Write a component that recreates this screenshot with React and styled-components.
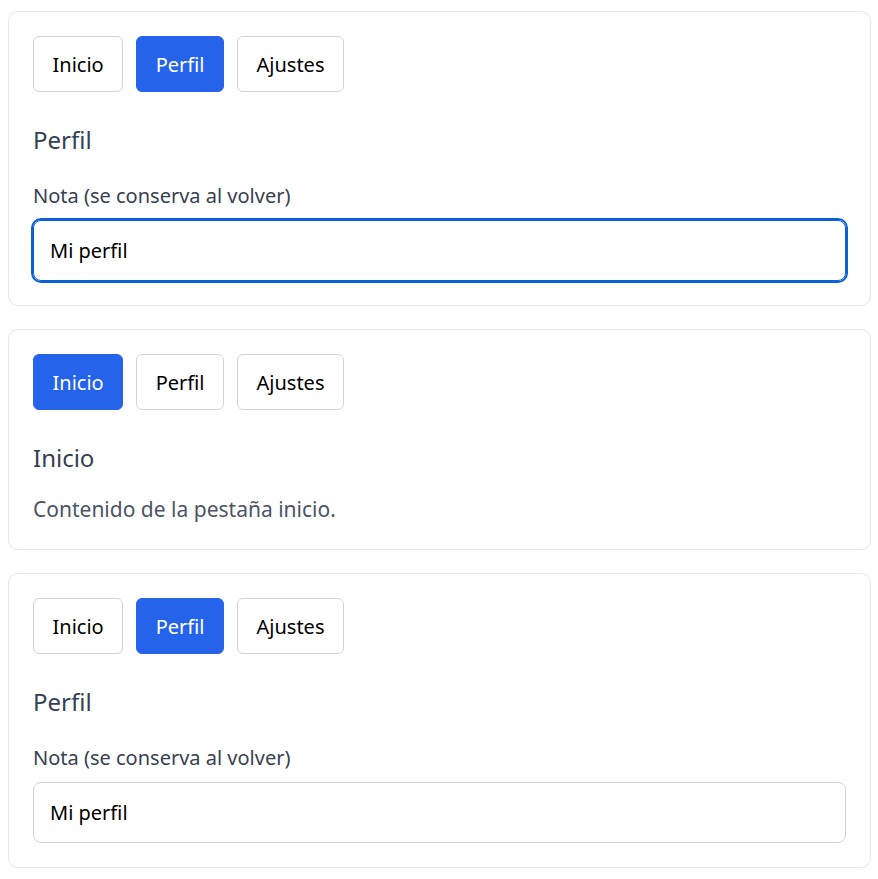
import React, { useState } from "react"
import styled, { createGlobalStyle } from "styled-components"

const GlobalStyle = createGlobalStyle`
  body {
    margin: 0;
    background: #ffffff;
    font-family: "Noto Sans", "Open Sans", Arial, sans-serif;
  }
`

const Page = styled.div`
  display: flex;
  flex-direction: column;
  gap: 23px;
  padding: 11px 7px 8px 8px;
`

const Card = styled.section`
  border: 1px solid #e5e7eb;
  border-radius: 10px;
  padding: 24px;
  background: #fff;
`

const TabBar = styled.div`
  display: flex;
  gap: 13px;
`

const TabButton = styled.button`
  height: 56px;
  padding: 0 18.5px;
  border-radius: 6px;
  font-family: inherit;
  font-size: 20px;
  cursor: pointer;
  border: 1px solid ${props => (props.active ? "#2563eb" : "#d4d4d8")};
  background: ${props => (props.active ? "#2563eb" : "#ffffff")};
  color: ${props => (props.active ? "#ffffff" : "#000000")};
`

const Heading = styled.h2`
  margin: 32px 0 0;
  font-size: 24px;
  line-height: 32px;
  font-weight: 400;
  color: #334155;
`

const Text = styled.p`
  margin: 20px 0 0;
  font-size: 21px;
  line-height: 31px;
  color: #4b5563;
`

const Label = styled.label`
  display: block;
  margin: 26px 0 10px;
  font-size: 20px;
  line-height: 28px;
  color: #374151;
`

const Input = styled.input`
  display: block;
  box-sizing: border-box;
  width: 100%;
  height: 61px;
  padding: 0 16px;
  border-radius: 8px;
  font-family: inherit;
  font-size: 20px;
  color: #000;
  border: 1px solid ${props => (props.focused ? "#0b5fd7" : "#d4d4d8")};
  outline: ${props => (props.focused ? "2px solid #0b5fd7" : "none")};
  outline-offset: 0;
`

const tabs = ["Inicio", "Perfil", "Ajustes"]

function TabsCard({ initial, focused }) {
  const [tab, setTab] = useState(initial)
  const [note, setNote] = useState("Mi perfil")

  return (
    <Card>
      <TabBar>
        {tabs.map(t => (
          <TabButton key={t} active={t === tab} onClick={() => setTab(t)}>
            {t}
          </TabButton>
        ))}
      </TabBar>
      <Heading>{tab}</Heading>
      {tab === "Perfil" ? (
        <>
          <Label>Nota (se conserva al volver)</Label>
          <Input
            focused={focused}
            value={note}
            onChange={e => setNote(e.target.value)}
          />
        </>
      ) : (
        <Text>Contenido de la pestaña {tab.toLowerCase()}.</Text>
      )}
    </Card>
  )
}

export default function App() {
  return (
    <>
      <GlobalStyle />
      <Page>
        <TabsCard initial="Perfil" focused />
        <TabsCard initial="Inicio" />
        <TabsCard initial="Perfil" />
      </Page>
    </>
  )
}
